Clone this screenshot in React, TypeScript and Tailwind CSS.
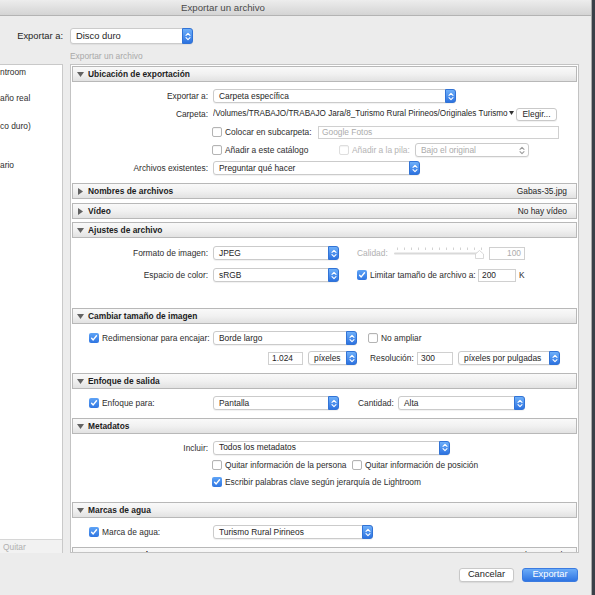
import React from "react";

const T = "text-[8.4px] leading-[10px]";

function UpDown({ color }: { color: string }) {
  return (
    <svg width="6" height="9" viewBox="0 0 6 9">
      <path d="M1 3.3 L3 1.3 L5 3.3" fill="none" stroke={color} strokeWidth="1.1" strokeLinecap="round" strokeLinejoin="round" />
      <path d="M1 5.7 L3 7.7 L5 5.7" fill="none" stroke={color} strokeWidth="1.1" strokeLinecap="round" strokeLinejoin="round" />
    </svg>
  );
}

function Popup({
  w,
  text,
  gray = false,
  h = "h-[14px]",
  size = "text-[8.4px]",
}: {
  w: string;
  text: string;
  gray?: boolean;
  h?: string;
  size?: string;
}) {
  return (
    <div className={`${w} ${h} shrink-0 flex rounded-[3px] border border-[#cbcbcb] bg-white shadow-[0_1px_1px_rgba(0,0,0,0.06)]`}>
      <span
        className={`flex-1 min-w-0 pl-[5px] flex items-center ${size} leading-none whitespace-nowrap overflow-hidden ${
          gray ? "text-[#ababab]" : "text-[#262626]"
        }`}
      >
        {text}
      </span>
      {gray ? (
        <span className="w-[12px] flex items-center justify-center">
          <UpDown color="#9c9c9c" />
        </span>
      ) : (
        <span className="w-[11px] -my-px -mr-px rounded-r-[3px] bg-gradient-to-b from-[#6fb0fa] to-[#2c72e0] border border-[#3173d6] flex items-center justify-center">
          <UpDown color="#ffffff" />
        </span>
      )}
    </div>
  );
}

function Input({ w, text, gray = false, right = false }: { w: string; text: string; gray?: boolean; right?: boolean }) {
  return (
    <div
      className={`${w} h-[13px] shrink-0 border border-[#d0d0d0] bg-white flex items-center px-[3px] text-[8.4px] leading-none ${
        right ? "justify-end" : ""
      } ${gray ? "text-[#acacac]" : "text-[#262626]"}`}
    >
      {text}
    </div>
  );
}

function Check({ checked = false, disabled = false }: { checked?: boolean; disabled?: boolean }) {
  if (checked)
    return (
      <span className="w-[10px] h-[10px] shrink-0 rounded-[2px] bg-gradient-to-b from-[#5ea3f6] to-[#2f75e1] flex items-center justify-center">
        <svg width="8" height="8" viewBox="0 0 8 8">
          <path d="M1.6 4.2 L3.2 5.9 L6.5 1.8" stroke="#ffffff" strokeWidth="1.4" fill="none" strokeLinecap="round" strokeLinejoin="round" />
        </svg>
      </span>
    );
  return (
    <span
      className={`block w-[10px] h-[10px] shrink-0 rounded-[2px] border bg-white shadow-[inset_0_1px_1px_rgba(0,0,0,0.05)] ${
        disabled ? "border-[#dedede]" : "border-[#b4b4b4]"
      }`}
    />
  );
}

function Label({ children }: { children: React.ReactNode }) {
  return <div className={`w-[142px] shrink-0 pr-[5px] text-right ${T} text-[#2e2e2e]`}>{children}</div>;
}

function CheckCell({ text }: { text: string }) {
  return (
    <div className="w-[142px] shrink-0 pl-[18px] flex items-center">
      <Check checked />
      <span className={`ml-[3px] ${T} text-[#2e2e2e] whitespace-nowrap`}>{text}</span>
    </div>
  );
}

function Header({ title, open = true, right }: { title: string; open?: boolean; right?: string }) {
  return (
    <div className="h-[16px] shrink-0 mx-[1px] border border-[#b8b8b8] bg-gradient-to-b from-[#f9f9f9] via-[#f1f1f1] to-[#e2e2e2] flex items-center pl-[4px] pr-[9px]">
      <span className="w-[7px] flex items-center justify-center">
        {open ? (
          <svg width="7" height="5" viewBox="0 0 7 5">
            <polygon points="0,0 7,0 3.5,5" fill="#626262" />
          </svg>
        ) : (
          <svg width="5" height="7" viewBox="0 0 5 7">
            <polygon points="0,0 5,3.5 0,7" fill="#626262" />
          </svg>
        )}
      </span>
      <span className={`ml-[4px] ${T} font-bold text-[#1c1c1c] whitespace-nowrap`}>{title}</span>
      {right && <span className={`ml-auto ${T} text-[#262626] whitespace-nowrap`}>{right}</span>}
    </div>
  );
}

function Row({ children, h = "h-[18px]" }: { children: React.ReactNode; h?: string }) {
  return <div className={`${h} flex items-center`}>{children}</div>;
}

function Slider() {
  const ticks = [];
  for (let i = 0; i < 13; i++) ticks.push(3 + i * 7);
  return (
    <svg width="90" height="12" viewBox="0 0 90 12">
      {ticks.map((x) => (
        <rect key={x} x={x} y={0.5} width={0.8} height={2.5} fill="#c9c9c9" />
      ))}
      <rect x={0} y={5.5} width={86} height={2} rx={1} fill="#d9d9d9" />
      <path d="M81.5 11.5 L81.5 7 L85.5 3.5 L89.5 7 L89.5 11.5 Z" fill="#ffffff" stroke="#cfcfcf" strokeWidth="0.8" />
    </svg>
  );
}

export default function App() {
  return (
    <div className="w-[595px] h-[595px] overflow-hidden flex font-['Liberation_Sans',Arial,sans-serif] text-[#2e2e2e]">
      <div className="w-[592px] h-full bg-[#ececec] flex flex-col border-r border-[#a9a9a9]">
        {/* title bar */}
        <div className="h-[16px] shrink-0 border-b border-[#b3b3b3] bg-gradient-to-b from-[#ededed] to-[#d4d4d4] flex items-center pl-[181px] text-[9.7px] leading-none text-[#4a4a4a]">
          Exportar un archivo
        </div>

        {/* exportar a */}
        <div className="mt-[12px] h-[16px] shrink-0 flex items-center">
          <div className="w-[63px] text-right text-[9.4px] leading-none text-[#262626]">Exportar a:</div>
          <div className="ml-[7px]">
            <Popup w="w-[123px]" h="h-[16px]" text="Disco duro" size="text-[9.4px]" />
          </div>
        </div>

        <div className={`mt-[7px] h-[10px] shrink-0 pl-[70px] ${T} text-[#a9a9a9]`}>Exportar un archivo</div>

        {/* main */}
        <div className="mt-[3px] h-[489px] shrink-0 flex">
          {/* left list */}
          <div className="w-[63px] h-full flex flex-col border-r border-t border-[#c9c9c9]">
            <div className={`flex-1 bg-white ${T} text-[#2e2e2e] whitespace-nowrap overflow-hidden`}>
              <div className="mt-[2px] h-[10px]">ntroom</div>
              <div className="mt-[16px] h-[10px]">año real</div>
              <div className="mt-[18px] h-[10px]">co duro)</div>
              <div className="mt-[29px] h-[10px]">ario</div>
            </div>
            <div className={`h-[14px] border-t border-[#d6d6d6] bg-[#f2f2f2] pl-[3px] flex items-center ${T} text-[#b0b0b0]`}>
              Quitar
            </div>
          </div>

          {/* right panel */}
          <div className="ml-[7px] w-[509px] h-full border border-[#c3c3c3] bg-white overflow-hidden flex flex-col">
            <div className="h-[1px] shrink-0" />

            {/* Ubicación */}
            <Header title="Ubicación de exportación" />
            <div className="h-[101px] shrink-0 pt-[5px]">
              <Row>
                <Label>Exportar a:</Label>
                <Popup w="w-[243px]" text="Carpeta específica" />
              </Row>
              <Row>
                <Label>Carpeta:</Label>
                <div className="w-[303px] shrink-0 flex items-center text-[8.15px] leading-[10px] text-[#262626] whitespace-nowrap overflow-hidden">
                  <span>/Volumes/TRABAJO/TRABAJO Jara/8_Turismo Rural Pirineos/Originales Turismo</span>
                  <svg width="5" height="4" viewBox="0 0 5 4" className="ml-[1px] -mt-[3px] shrink-0">
                    <polygon points="0,0 5,0 2.5,4" fill="#333" />
                  </svg>
                </div>
                <div className={`w-[41px] h-[13px] shrink-0 rounded-[3px] border border-[#c9c9c9] bg-white shadow-[0_1px_1px_rgba(0,0,0,0.06)] flex items-center justify-center ${T} text-[#262626]`}>
                  Elegir...
                </div>
              </Row>
              <Row>
                <div className="w-[141px] shrink-0" />
                <Check />
                <span className={`ml-[3px] w-[93px] shrink-0 ${T} text-[#2e2e2e] whitespace-nowrap`}>Colocar en subcarpeta:</span>
                <Input w="w-[241px]" text="Google Fotos" gray />
              </Row>
              <Row>
                <div className="w-[141px] shrink-0" />
                <Check />
                <span className={`ml-[3px] w-[114px] shrink-0 ${T} text-[#2e2e2e] whitespace-nowrap`}>Añadir a este catálogo</span>
                <Check disabled />
                <span className={`ml-[3px] w-[63px] shrink-0 ${T} text-[#b4b4b4] whitespace-nowrap`}>Añadir a la pila:</span>
                <Popup w="w-[114px]" text="Bajo el original" gray />
              </Row>
              <Row>
                <Label>Archivos existentes:</Label>
                <Popup w="w-[207px]" text="Preguntar qué hacer" />
              </Row>
            </div>

            <Header title="Nombres de archivos" open={false} right="Gabas-35.jpg" />
            <div className="h-[4px] shrink-0" />
            <Header title="Vídeo" open={false} right="No hay vídeo" />
            <div className="h-[3px] shrink-0" />

            {/* Ajustes de archivo */}
            <Header title="Ajustes de archivo" />
            <div className="h-[70px] shrink-0 pt-[6px] flex flex-col gap-[4px]">
              <Row>
                <Label>Formato de imagen:</Label>
                <Popup w="w-[126px]" text="JPEG" />
                <span className={`ml-[18px] w-[37px] shrink-0 ${T} text-[#b0b0b0]`}>Calidad:</span>
                <Slider />
                <div className="ml-[5px]">
                  <Input w="w-[36px]" text="100" gray right />
                </div>
              </Row>
              <Row>
                <Label>Espacio de color:</Label>
                <Popup w="w-[126px]" text="sRGB" />
                <span className="ml-[18px] block">
                  <Check checked />
                </span>
                <span className={`ml-[3px] w-[108px] shrink-0 ${T} text-[#2e2e2e] whitespace-nowrap`}>Limitar tamaño de archivo a:</span>
                <Input w="w-[38px]" text="200" />
                <span className={`ml-[3px] ${T} text-[#2e2e2e]`}>K</span>
              </Row>
            </div>

            {/* Cambiar tamaño */}
            <Header title="Cambiar tamaño de imagen" />
            <div className="h-[49px] shrink-0 pt-[5px] flex flex-col gap-[2px]">
              <Row>
                <CheckCell text="Redimensionar para encajar:" />
                <Popup w="w-[144px]" text="Borde largo" />
                <span className="ml-[11px] block">
                  <Check />
                </span>
                <span className={`ml-[3px] ${T} text-[#2e2e2e]`}>No ampliar</span>
              </Row>
              <Row>
                <div className="w-[197px] shrink-0" />
                <Input w="w-[35px]" text="1.024" />
                <div className="ml-[5px]">
                  <Popup w="w-[49px]" text="píxeles" />
                </div>
                <span className={`ml-[13px] w-[47px] shrink-0 ${T} text-[#2e2e2e]`}>Resolución:</span>
                <Input w="w-[36px]" text="300" />
                <div className="ml-[5px]">
                  <Popup w="w-[102px]" text="píxeles por pulgadas" />
                </div>
              </Row>
            </div>

            {/* Enfoque */}
            <Header title="Enfoque de salida" />
            <div className="h-[29px] shrink-0 pt-[5px]">
              <Row>
                <CheckCell text="Enfoque para:" />
                <Popup w="w-[126px]" text="Pantalla" />
                <span className={`ml-[19px] w-[40px] shrink-0 ${T} text-[#2e2e2e]`}>Cantidad:</span>
                <Popup w="w-[127px]" text="Alta" />
              </Row>
            </div>

            {/* Metadatos */}
            <Header title="Metadatos" />
            <div className="h-[68px] shrink-0 pt-[5px]">
              <Row h="h-[17px]">
                <Label>Incluir:</Label>
                <Popup w="w-[237px]" text="Todos los metadatos" />
              </Row>
              <Row h="h-[17px]">
                <div className="w-[141px] shrink-0" />
                <Check />
                <span className={`ml-[3px] w-[127px] shrink-0 ${T} text-[#2e2e2e] whitespace-nowrap`}>Quitar información de la persona</span>
                <Check />
                <span className={`ml-[3px] ${T} text-[#2e2e2e] whitespace-nowrap`}>Quitar información de posición</span>
              </Row>
              <Row h="h-[17px]">
                <div className="w-[141px] shrink-0" />
                <Check checked />
                <span className={`ml-[3px] ${T} text-[#2e2e2e] whitespace-nowrap`}>Escribir palabras clave según jerarquía de Lightroom</span>
              </Row>
            </div>

            {/* Marcas de agua */}
            <Header title="Marcas de agua" />
            <div className="h-[29px] shrink-0 pt-[5px]">
              <Row>
                <CheckCell text="Marca de agua:" />
                <Popup w="w-[160px]" text="Turismo Rural Pirineos" />
              </Row>
            </div>

            <Header title="Postprocesamiento" open={false} right="No hacer nada" />
          </div>
        </div>

        {/* buttons */}
        <div className="mt-[15px] h-[14px] shrink-0 flex justify-end pr-[13px] gap-[8px]">
          <div className="w-[55px] h-[14px] rounded-[3px] border border-[#c8c8c8] bg-white shadow-[0_1px_1px_rgba(0,0,0,0.08)] flex items-center justify-center text-[9.3px] leading-none text-[#262626]">
            Cancelar
          </div>
          <div className="w-[56px] h-[14px] rounded-[3px] border border-[#3b7be0] bg-gradient-to-b from-[#6cacf8] to-[#2f74e2] flex items-center justify-center text-[9.3px] leading-none text-white">
            Exportar
          </div>
        </div>
      </div>
      <div className="w-[3px] h-full bg-[#3a4048]" />
    </div>
  );
}
